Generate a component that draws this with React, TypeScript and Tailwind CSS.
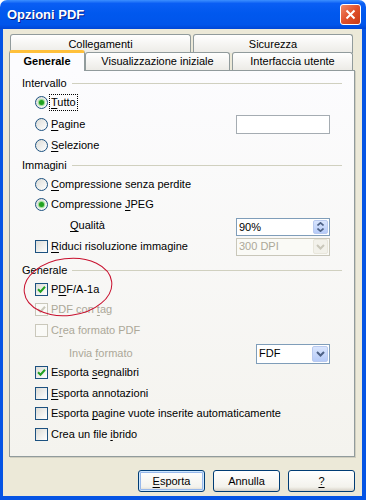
import React from "react";

const U = ({ children }: { children: React.ReactNode }) => (
  <span className="underline decoration-1 underline-offset-[2px]">{children}</span>
);

function Radio({ checked }: { checked?: boolean }) {
  return (
    <span className="w-[13px] h-[13px] rounded-full border border-[#1C5180] bg-[linear-gradient(135deg,#DCDCD7,#FFFFFF)] flex items-center justify-center shrink-0">
      {checked && <span className="w-[5px] h-[5px] rounded-full bg-[#21A121] shadow-[0_0_1px_1px_#8EDA8A]" />}
    </span>
  );
}

function Check({ checked, disabled }: { checked?: boolean; disabled?: boolean }) {
  return (
    <span
      className={
        disabled
          ? "w-[13px] h-[13px] border border-[#CAC8BB] bg-[#FAFAF7] flex items-center justify-center shrink-0"
          : "w-[13px] h-[13px] border border-[#1C5180] bg-[linear-gradient(135deg,#DCDCD7,#FFFFFF)] flex items-center justify-center shrink-0"
      }
    >
      {checked && (
        <svg width="9" height="9" viewBox="0 0 9 9">
          <path d="M1 4.2 L3.5 6.7 L8 1.8" stroke={disabled ? "#C9C7BA" : "#21A121"} strokeWidth="2" fill="none" />
        </svg>
      )}
    </span>
  );
}

function Section({ label, cls }: { label: string; cls: string }) {
  return (
    <div className={"h-[19px] flex items-center pl-[12px] pr-[12px] " + cls}>
      <span>{label}</span>
      <span className="flex-1 h-px bg-[#D0D0BF] ml-[5px]" />
    </div>
  );
}

function DropBtn({ disabled }: { disabled?: boolean }) {
  return (
    <span
      className={
        disabled
          ? "w-[15px] h-[15px] mr-px rounded-[2px] border border-[#E8E6DB] bg-[#F2F1EA] flex items-center justify-center"
          : "w-[15px] h-[15px] mr-px rounded-[2px] border border-[#B9CAEF] bg-[linear-gradient(to_bottom,#D9E5FD,#B6CBF8)] flex items-center justify-center"
      }
    >
      <svg width="9" height="6" viewBox="0 0 9 6">
        <path d="M1 1 L4.5 4.5 L8 1" stroke={disabled ? "#C9C7BA" : "#4D6185"} strokeWidth="2" fill="none" />
      </svg>
    </span>
  );
}

function Btn({ children, def }: { children: React.ReactNode; def?: boolean }) {
  return (
    <div
      className={
        def
          ? "w-[67px] h-[22px] rounded-[3px] border border-[#003C74] bg-[linear-gradient(to_bottom,#FFFFFF,#F3F2EC_80%,#D6D0C5)] flex items-center justify-center shadow-[inset_0_0_0_1px_#CEE7FF,inset_0_0_0_2px_#98B8EA]"
          : "w-[67px] h-[22px] rounded-[3px] border border-[#003C74] bg-[linear-gradient(to_bottom,#FFFFFF,#F3F2EC_80%,#D6D0C5)] flex items-center justify-center"
      }
    >
      {children}
    </div>
  );
}

export default function App() {
  return (
    <div className="w-[366px] h-[500px] flex flex-col bg-white text-[11px] text-black font-['Tahoma','Liberation_Sans',sans-serif] leading-none">
      {/* title bar */}
      <div className="h-[29px] shrink-0 rounded-t-[7px] flex items-center bg-[linear-gradient(to_bottom,#3C8FFF_0%,#0A5EF4_12%,#0058EE_45%,#0055EB_85%,#0046D6_100%)]">
        <span className="ml-[7px] text-white font-bold text-[13px] font-['Liberation_Sans',sans-serif] [text-shadow:1px_1px_0_#0A1E8A]">
          Opzioni PDF
        </span>
        <div className="ml-auto mr-[5px] w-[21px] h-[21px] rounded-[3px] border border-white bg-[linear-gradient(135deg,#F08A68,#E0502B_50%,#C73A16)] flex items-center justify-center">
          <svg width="11" height="11" viewBox="0 0 11 11">
            <path d="M1.5 1.5 L9.5 9.5 M9.5 1.5 L1.5 9.5" stroke="white" strokeWidth="2" />
          </svg>
        </div>
      </div>

      {/* body */}
      <div className="flex-1 flex flex-col bg-[#ECE9D8] border-l-[3px] border-r-[4px] border-b-[4px] border-[#0554E4]">
        {/* tabs */}
        <div className="mt-[5px] flex flex-col">
          <div className="h-[18px] flex ml-[7px] gap-[2px]">
            <div className="w-[181px] h-[19px] rounded-t-[3px] border border-b-0 border-[#919B9C] bg-[linear-gradient(to_bottom,#FFFFFF,#ECEBE6)] flex items-center justify-center">
              Collegamenti
            </div>
            <div className="w-[160px] h-[19px] rounded-t-[3px] border border-b-0 border-[#919B9C] bg-[linear-gradient(to_bottom,#FFFFFF,#ECEBE6)] flex items-center justify-center">
              Sicurezza
            </div>
          </div>
          <div className="h-[18px] flex ml-[6px] relative z-10">
            <div className="w-[76px] h-[21px] -mt-[2px] rounded-t-[3px] border-x border-[#919B9C] border-t-[3px] border-t-[#FFC03A] bg-[#FCFCFE] flex items-center justify-center font-bold pb-[1px]">
              Generale
            </div>
            <div className="w-[145px] h-[18px] rounded-t-[3px] border border-b-0 border-[#919B9C] bg-[linear-gradient(to_bottom,#FFFFFF,#ECEBE6)] flex items-center justify-center">
              Visualizzazione iniziale
            </div>
            <div className="w-[121px] ml-[2px] h-[18px] rounded-t-[3px] border border-b-0 border-[#919B9C] bg-[linear-gradient(to_bottom,#FFFFFF,#ECEBE6)] flex items-center justify-center">
              Interfaccia utente
            </div>
          </div>
        </div>

        {/* panel */}
        <div className="relative ml-[6px] w-[346px] h-[387px] border border-[#919B9C] bg-[linear-gradient(to_bottom,#FCFCFE,#F4F3EE)] shadow-[1px_1px_0_#D0CEBF] pt-[3px] flex flex-col">
          <Section label="Intervallo" cls="" />
          <div className="h-[19px] flex items-center pl-[25px]">
            <Radio checked />
            <span className="ml-[2px] outline-1 outline-dotted outline-black px-px py-[2px]">
              <U>T</U>utto
            </span>
          </div>
          <div className="h-[19px] mt-[3px] flex items-center pl-[25px] pr-[24px]">
            <Radio />
            <span className="ml-[3px]">
              <U>P</U>agine
            </span>
            <div className="ml-auto w-[94px] h-[19px] border border-[#A5ACB2] bg-white" />
          </div>
          <div className="h-[19px] mt-[2px] flex items-center pl-[25px]">
            <Radio />
            <span className="ml-[3px]">
              <U>S</U>elezione
            </span>
          </div>
          <Section label="Immagini" cls="mt-[1px]" />
          <div className="h-[19px] flex items-center pl-[25px]">
            <Radio />
            <span className="ml-[3px]">
              <U>C</U>ompressione senza perdite
            </span>
          </div>
          <div className="h-[19px] mt-[1px] flex items-center pl-[25px]">
            <Radio checked />
            <span className="ml-[3px]">
              Compressione <U>J</U>PEG
            </span>
          </div>
          <div className="h-[19px] mt-[2px] flex items-center pl-[60px] pr-[24px]">
            <span>
              <U>Q</U>ualità
            </span>
            <div className="ml-auto w-[94px] h-[18px] mt-[3px] border border-[#7F9DB9] bg-white flex items-center">
              <span className="flex-1 pl-[2px]">90%</span>
              <span className="w-[15px] h-[14px] mr-px rounded-[2px] border border-[#B9CAEF] bg-[linear-gradient(to_bottom,#D9E5FD,#B6CBF8)] flex flex-col items-center justify-center gap-[2px]">
                <svg width="7" height="4" viewBox="0 0 7 4">
                  <path d="M0.5 3.5 L3.5 0.8 L6.5 3.5" stroke="#4D6185" strokeWidth="1.6" fill="none" />
                </svg>
                <svg width="7" height="4" viewBox="0 0 7 4">
                  <path d="M0.5 0.5 L3.5 3.2 L6.5 0.5" stroke="#4D6185" strokeWidth="1.6" fill="none" />
                </svg>
              </span>
            </div>
          </div>
          <div className="h-[19px] mt-[2px] flex items-center pl-[25px] pr-[24px]">
            <Check />
            <span className="ml-[3px]">
              <U>R</U>iduci risoluzione immagine
            </span>
            <div className="ml-auto w-[94px] h-[18px] border border-[#C9C7BA] bg-[#FAFAF6] flex items-center text-[#ACA899]">
              <span className="flex-1 pl-[2px]">300 DPI</span>
              <DropBtn disabled />
            </div>
          </div>
          <Section label="Generale" cls="mt-[5px]" />
          <div className="h-[19px] flex items-center pl-[25px]">
            <Check checked />
            <span className="ml-[3px]">
              P<U>D</U>F/A-1a
            </span>
          </div>
          <div className="h-[19px] mt-[1px] flex items-center pl-[25px] text-[#ACA899]">
            <Check checked disabled />
            <span className="ml-[3px]">
              PDF con <U>t</U>ag
            </span>
          </div>
          <div className="h-[19px] mt-[2px] flex items-center pl-[25px] text-[#ACA899]">
            <Check disabled />
            <span className="ml-[3px]">
              C<U>r</U>ea formato PDF
            </span>
          </div>
          <div className="h-[19px] mt-[4px] flex items-center pl-[59px] pr-[24px] text-[#ACA899]">
            <span>
              Invia <U>f</U>ormato
            </span>
            <div className="ml-auto w-[74px] h-[20px] border border-[#7F9DB9] bg-white flex items-center text-black">
              <span className="flex-1 pl-[2px]">FDF</span>
              <span className="w-[16px] h-[16px] mr-px rounded-[2px] border border-[#B9CAEF] bg-[linear-gradient(to_bottom,#D9E5FD,#B6CBF8)] flex items-center justify-center">
                <svg width="9" height="6" viewBox="0 0 9 6">
                  <path d="M1 1 L4.5 4.5 L8 1" stroke="#4D6185" strokeWidth="2" fill="none" />
                </svg>
              </span>
            </div>
          </div>
          <div className="h-[19px] flex items-center pl-[25px]">
            <Check checked />
            <span className="ml-[3px]">
              Esporta <U>s</U>egnalibri
            </span>
          </div>
          <div className="h-[19px] mt-[2px] flex items-center pl-[25px]">
            <Check />
            <span className="ml-[3px]">
              <U>E</U>sporta annotazioni
            </span>
          </div>
          <div className="h-[19px] mt-[1px] flex items-center pl-[25px]">
            <Check />
            <span className="ml-[3px]">
              Esporta <U>p</U>agine vuote inserite automaticamente
            </span>
          </div>
          <div className="h-[19px] mt-[2px] flex items-center pl-[25px]">
            <Check />
            <span className="ml-[3px]">
              Crea un file <U>i</U>brido
            </span>
          </div>

          {/* red annotation ellipse */}
          <svg className="absolute left-[12px] top-[185px] pointer-events-none" width="92" height="62" viewBox="0 0 92 62">
            <ellipse cx="46" cy="31" rx="44" ry="28.5" fill="none" stroke="#C8102E" strokeWidth="1" transform="rotate(-7 46 31)" />
          </svg>
        </div>

        {/* buttons */}
        <div className="mt-[13px] flex justify-end gap-[8px] pr-[7px]">
          <Btn def>
            <U>E</U>sporta
          </Btn>
          <Btn>Annulla</Btn>
          <Btn>
            <U>?</U>
          </Btn>
        </div>
      </div>
    </div>
  );
}
